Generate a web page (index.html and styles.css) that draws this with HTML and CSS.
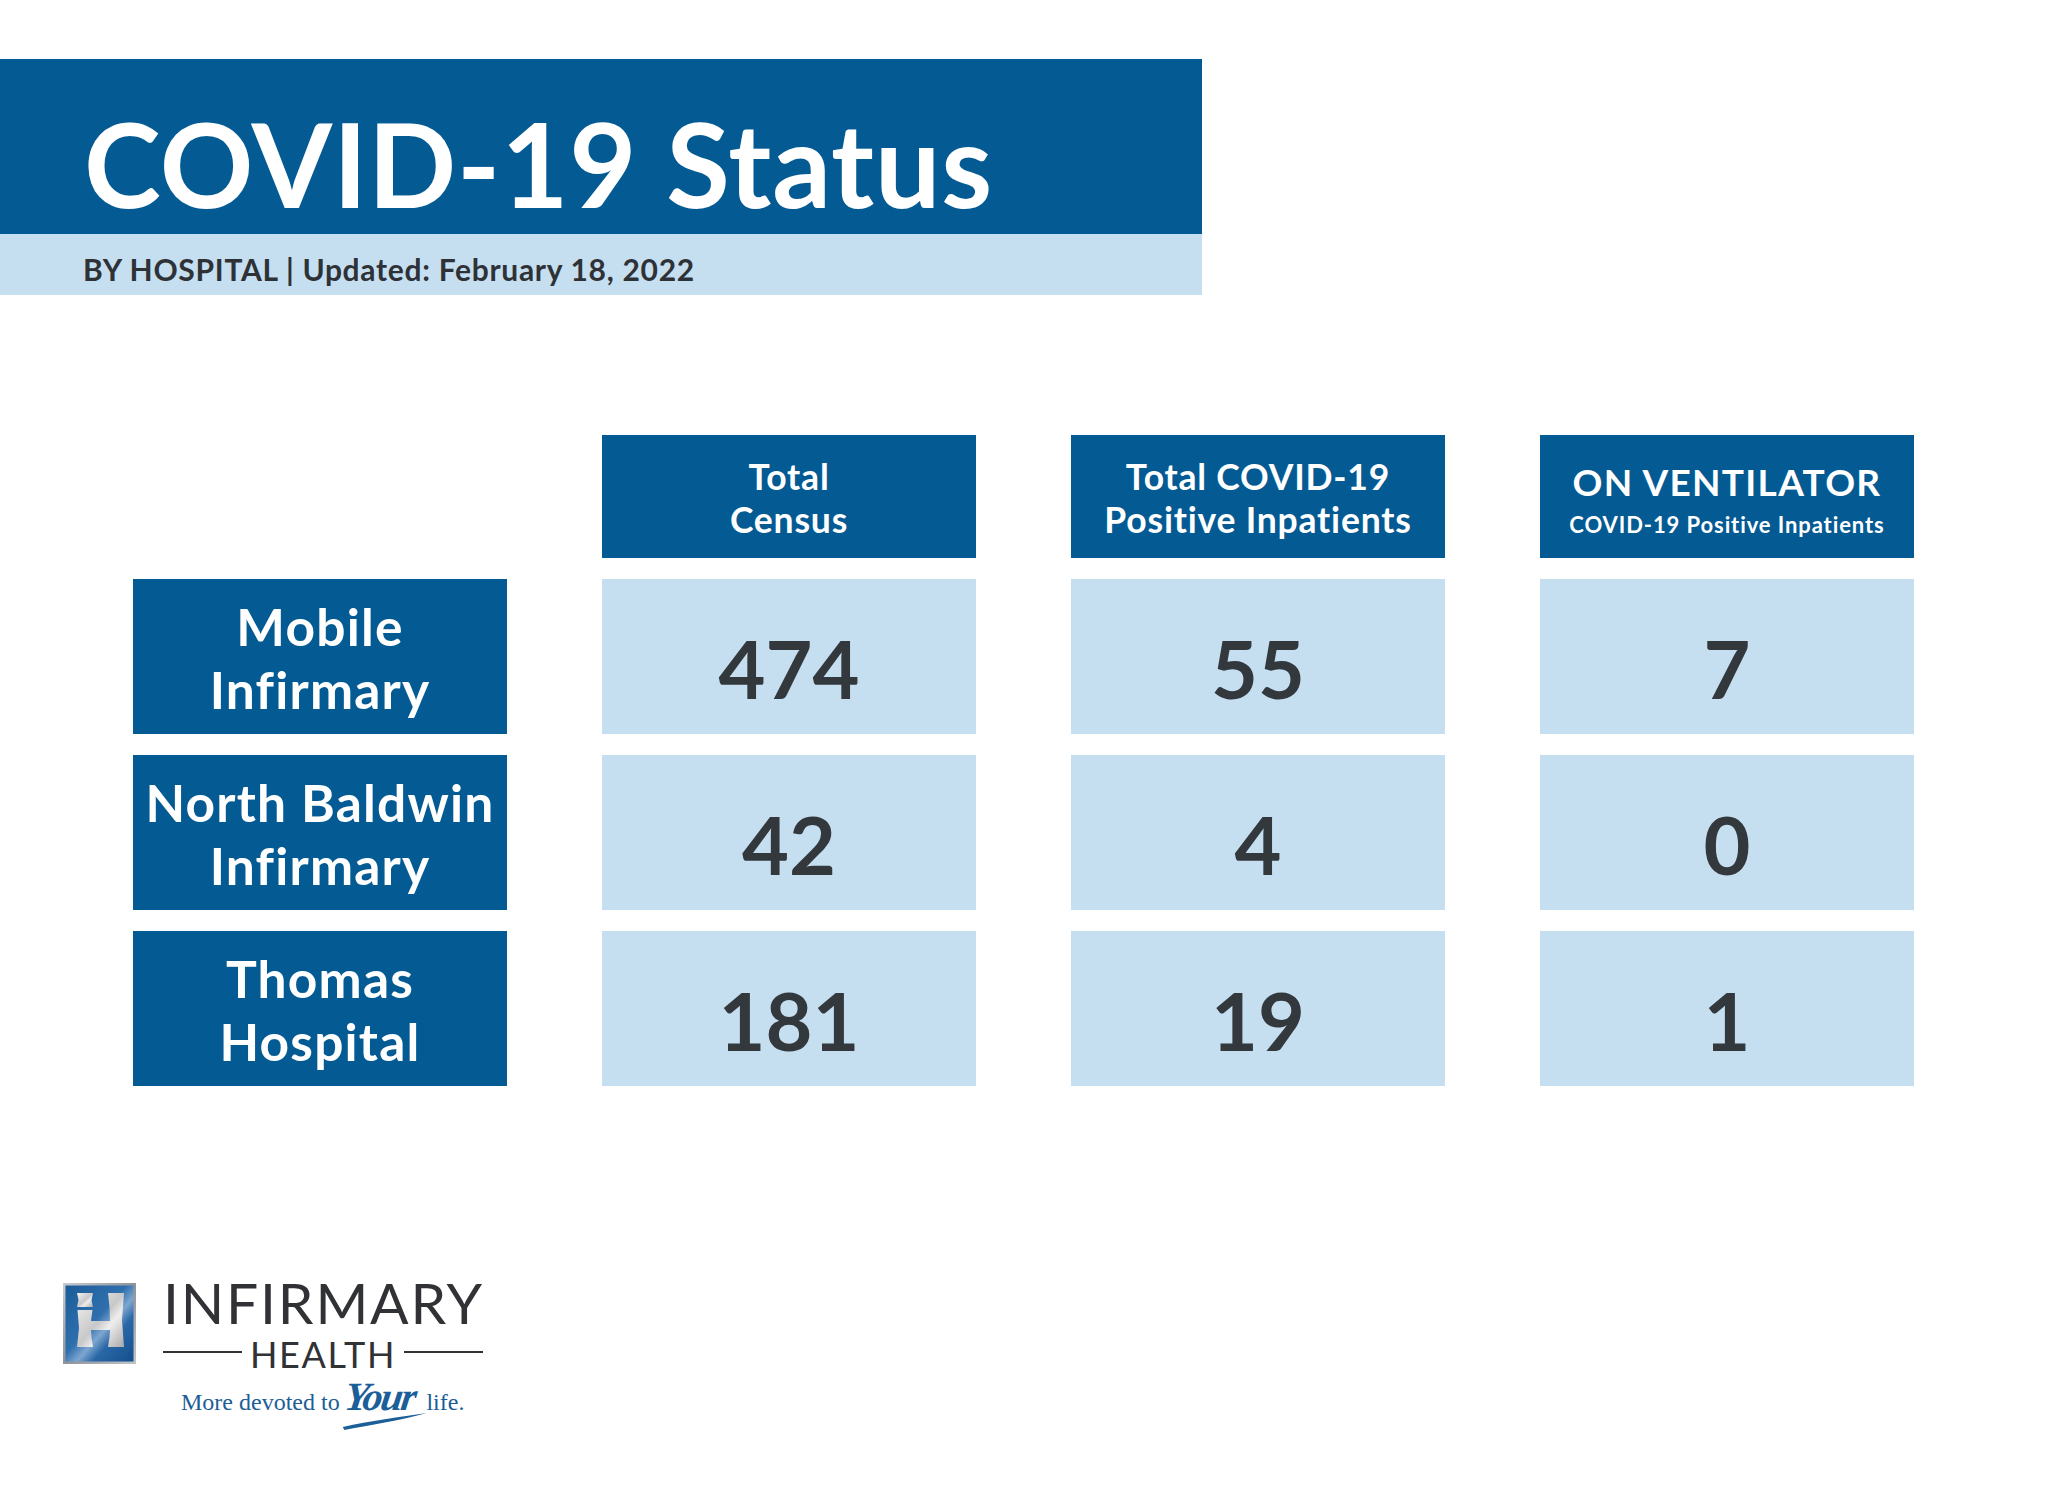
FILE: index.html
```html
<!DOCTYPE html>
<html lang="en">
<head>
<meta charset="utf-8">
<title>COVID-19 Status</title>
<link rel="stylesheet" href="styles.css">
</head>
<body>
<div class="page">
  <header class="banner">
    <div class="banner-title"><h1>COVID-19 Status</h1></div>
    <div class="banner-sub">BY HOSPITAL | Updated: February 18, 2022</div>
  </header>

  <section class="grid">
    <div class="corner"></div>
    <div class="head"><span>Total</span><span>Census</span></div>
    <div class="head"><span>Total COVID-19</span><span>Positive Inpatients</span></div>
    <div class="head head-vent"><span class="vent-main">ON VENTILATOR</span><span class="vent-sub">COVID-19 Positive Inpatients</span></div>

    <div class="label"><span>Mobile</span><span>Infirmary</span></div>
    <div class="num">474</div>
    <div class="num">55</div>
    <div class="num">7</div>

    <div class="label"><span>North Baldwin</span><span>Infirmary</span></div>
    <div class="num">42</div>
    <div class="num">4</div>
    <div class="num">0</div>

    <div class="label"><span>Thomas</span><span>Hospital</span></div>
    <div class="num">181</div>
    <div class="num">19</div>
    <div class="num">1</div>
  </section>

  <footer class="brand">
    <div class="brand-row">
      <svg class="brand-mark" viewBox="0 0 73 81" width="73" height="81" aria-hidden="true">
        <defs>
          <linearGradient id="frame" x1="0" y1="0" x2="1" y2="1">
            <stop offset="0" stop-color="#c9cdd1"/>
            <stop offset="0.5" stop-color="#8e9399"/>
            <stop offset="1" stop-color="#c2c6ca"/>
          </linearGradient>
          <linearGradient id="field" x1="0" y1="0" x2="1" y2="1">
            <stop offset="0" stop-color="#1a5c98"/>
            <stop offset="0.45" stop-color="#2f6fae"/>
            <stop offset="0.58" stop-color="#7ea6cf"/>
            <stop offset="0.7" stop-color="#2a67a6"/>
            <stop offset="1" stop-color="#134f8c"/>
          </linearGradient>
          <linearGradient id="silver" x1="0" y1="0" x2="1" y2="1">
            <stop offset="0" stop-color="#f4f4f4"/>
            <stop offset="0.5" stop-color="#c8c8c8"/>
            <stop offset="0.65" stop-color="#eeeeee"/>
            <stop offset="1" stop-color="#a9a9a9"/>
          </linearGradient>
        </defs>
        <rect x="0" y="0" width="73" height="81" fill="url(#frame)"/>
        <rect x="2.5" y="2.5" width="68" height="76" fill="url(#field)"/>
        <path d="M14 10 H30 L28.5 17 L30 24 H14 L15.5 17 Z" fill="url(#silver)"/>
        <path d="M14.5 27 H29.5 L28 38 H47 L46.5 24 L45 10 H61 L59 37 L61 64 H45 L46.5 54 L47 47 H28 L28.5 55 L30 64 H14 L16 45 Z" fill="url(#silver)"/>
      </svg>
      <div class="brand-words">
        <div class="brand-name">INFIRMARY</div>
        <div class="brand-health"><span class="rule"></span><span>HEALTH</span><span class="rule"></span></div>
      </div>
    </div>
    <div class="tagline">
      <span>More devoted to</span>
      <span class="your">Your<svg class="swoosh" viewBox="0 0 90 20" width="90" height="20" aria-hidden="true"><path d="M4 16 C 30 10, 60 6, 86 2 C 62 9, 32 14, 6 19 Z" fill="#1b5e98"/></svg></span>
      <span class="life">life.</span>
    </div>
  </footer>
</div>
</body>
</html>
```

FILE: styles.css
```css
* { box-sizing: border-box; }

html, body {
  margin: 0;
  padding: 0;
  background: #ffffff;
}

body {
  font-family: "Lato", "Open Sans", "Liberation Sans", sans-serif;
  color: #ffffff;
}

.page {
  width: 2048px;
  height: 1493px;
  padding-top: 59px;
  overflow: hidden;
}

/* ---------- banner ---------- */
.banner {
  width: 1202px;
}

.banner-title {
  height: 175px;
  background: #045a93;
  display: flex;
  align-items: center;
  padding: 35px 0 0 84px;
}

.banner-title h1 {
  margin: 0;
  font-size: 116px;
  line-height: 1.2;
  font-weight: 700;
  letter-spacing: 0.8px;
  color: #ffffff;
}

.banner-sub {
  height: 61px;
  background: #c5dff1;
  display: flex;
  align-items: center;
  padding: 8px 0 0 83px;
  font-size: 30px;
  font-weight: 700;
  letter-spacing: 0.7px;
  color: #2e3237;
}

/* ---------- table ---------- */
.grid {
  margin: 140px 0 0 133px;
  display: grid;
  grid-template-columns: repeat(4, 374px);
  grid-template-rows: 123px repeat(3, 155px);
  column-gap: 95px;
  row-gap: 21px;
}

.head,
.label {
  background: #045a93;
  color: #ffffff;
  display: flex;
  flex-direction: column;
  align-items: center;
  justify-content: center;
  text-align: center;
}

.head {
  font-size: 35.5px;
  line-height: 43px;
  font-weight: 700;
  letter-spacing: 0.8px;
  padding-top: 2px;
}

.head-vent {
  justify-content: flex-start;
  padding-top: 24px;
}

.vent-main {
  font-size: 37px;
  line-height: 45px;
  letter-spacing: 1.3px;
}

.vent-sub {
  font-size: 22px;
  line-height: 34px;
  letter-spacing: 0.9px;
  margin-top: 4px;
}

.label {
  font-size: 51.5px;
  line-height: 63px;
  font-weight: 700;
  letter-spacing: 1.2px;
  padding-top: 3px;
}

.num {
  background: #c5dff1;
  color: #33383d;
  display: flex;
  align-items: center;
  justify-content: center;
  font-size: 81px;
  font-weight: 700;
  line-height: 1.2;
  padding-top: 22px;
}

/* ---------- brand ---------- */
.brand {
  margin: 185px 0 0 63px;
  width: 420px;
}

.brand-row {
  display: flex;
  align-items: flex-start;
  gap: 27px;
}

.brand-mark {
  display: block;
  flex: none;
  margin-top: 12px;
}

.brand-words {
  display: flex;
  flex-direction: column;
  width: 320px;
}

.brand-name {
  font-size: 57px;
  line-height: 62px;
  font-weight: 400;
  letter-spacing: 1.8px;
  color: #303236;
}

.brand-health {
  display: flex;
  align-items: center;
  gap: 8px;
  font-size: 36px;
  line-height: 42px;
  font-weight: 400;
  letter-spacing: 1.6px;
  color: #303236;
}

.rule {
  flex: 1;
  height: 2px;
  margin-top: -4px;
  background: #303236;
}

.tagline {
  display: flex;
  align-items: baseline;
  gap: 5px;
  margin: 2px 0 0 118px;
  font-family: "Liberation Serif", "Times New Roman", serif;
  font-size: 24px;
  line-height: 1.2;
  color: #1b5e98;
  white-space: nowrap;
}

.your {
  position: relative;
  font-size: 40px;
  line-height: 1;
  font-style: italic;
  font-weight: 700;
  letter-spacing: -2px;
  transform: skewX(-8deg);
  display: inline-block;
}

.life {
  margin-left: 7px;
}

.swoosh {
  position: absolute;
  left: -2px;
  bottom: -14px;
}
```
